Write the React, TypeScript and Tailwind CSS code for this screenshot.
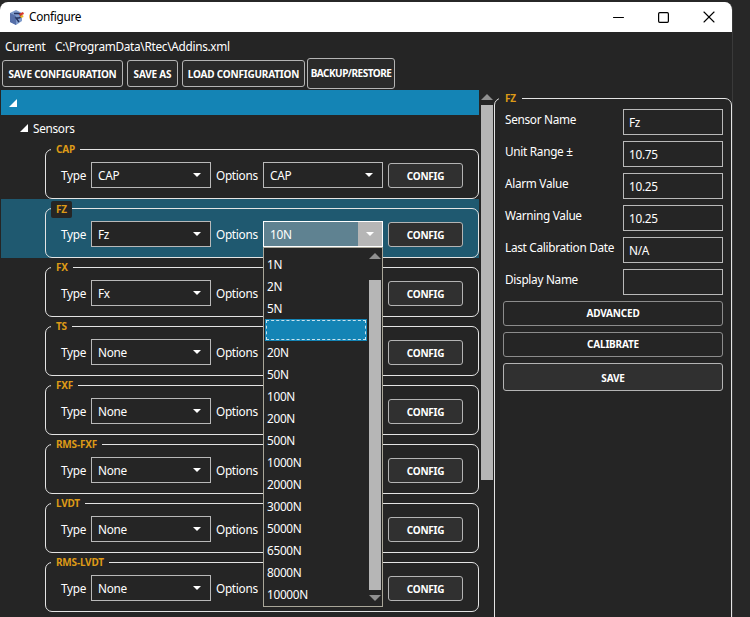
import { Minus, Square, X } from 'lucide-react';

const sensors = [
  { name: 'CAP', type: 'CAP', option: 'CAP' },
  { name: 'FZ', type: 'Fz', option: '10N', selected: true },
  { name: 'FX', type: 'Fx', option: '' },
  { name: 'TS', type: 'None', option: '' },
  { name: 'FXF', type: 'None', option: '' },
  { name: 'RMS-FXF', type: 'None', option: '' },
  { name: 'LVDT', type: 'None', option: '' },
  { name: 'RMS-LVDT', type: 'None', option: '' },
];

const ranges = ['1N', '2N', '5N', '', '20N', '50N', '100N', '200N', '500N', '1000N', '2000N', '3000N', '5000N', '6500N', '8000N', '10000N'];

const fields = [
  { label: 'Sensor Name', value: 'Fz' },
  { label: 'Unit Range ±', value: '10.75' },
  { label: 'Alarm Value', value: '10.25' },
  { label: 'Warning Value', value: '10.25' },
  { label: 'Last Calibration Date', value: 'N/A' },
  { label: 'Display Name', value: '' },
];

function AppIcon() {
  return (
    <svg width="17" height="17" viewBox="0 0 17 17" className="shrink-0">
      <path d="M8 1l6 3v8l-6 4-6-3V4z" fill="#7f9bcb" />
      <path d="M2 4l6 3v9l-6-3z" fill="#566fa8" />
      <path d="M6 4.5h4.5a2 2 0 0 1 0 4.5H8l3 4" fill="none" stroke="#24335f" strokeWidth="1.4" />
      <path d="M11 5l4-2 1 2-4 2z" fill="#d8372a" />
      <path d="M12 7l3-1 .5 2-2.5 1z" fill="#eeb51f" />
    </svg>
  );
}

function ToolButton({ label, className }: { label: string; className: string }) {
  return (
    <div className={`flex h-[27px] items-center justify-center rounded-[3px] border border-[#b4b4b4] bg-[#2a2a2a] pt-[2px] text-[10px] font-bold tracking-[-0.2px] text-white ${className}`}>
      {label}
    </div>
  );
}

function Caret() {
  return <div className="h-0 w-0 border-x-[4px] border-t-[4px] border-x-transparent border-t-white" />;
}

function ComboBox({ value }: { value: string }) {
  return (
    <div className="flex h-[26px] w-[120px] items-center justify-between border border-[#b9b9b9] bg-[#252525] pl-[6px] pr-[9px] text-white">
      <span className="pt-[2px]">{value}</span>
      <Caret />
    </div>
  );
}

function OpenComboBox({ value }: { value: string }) {
  return (
    <div className="relative h-[26px] w-[120px]">
      <div className="flex h-full border border-white bg-[#5f8291] text-white">
        <span className="flex-1 self-center pl-[6px] pt-[2px]">{value}</span>
        <div className="flex w-[24px] items-center justify-center bg-[#b6b6b6]">
          <Caret />
        </div>
      </div>
      <div className="absolute left-0 top-[26px] z-10 h-[360px] w-[120px] border border-[#a9a699] bg-[#252525] pl-px pt-[5px]">
        {ranges.map((range, i) => (
          <div
            key={i}
            className={`flex h-[22px] w-[102px] items-center pl-[2px] pt-[2px] text-white ${range === '' ? 'border-[2px] border-[#1484b5] bg-[#1484b5] outline-1 -outline-offset-2 outline-dashed outline-[#c8e4f0]' : ''}`}
          >
            {range}
          </div>
        ))}
        <div className="absolute right-px top-[5px] flex h-[348px] w-[12px] flex-col items-center">
          <div className="h-0 w-0 border-x-[6px] border-b-[6px] border-x-transparent border-b-[#8f8f8f]" />
          <div className="mt-[21px] h-[310px] w-[12px] bg-[#b6b6b6]" />
          <div className="mt-[5px] h-0 w-0 border-x-[6px] border-t-[6px] border-x-transparent border-t-[#8f8f8f]" />
        </div>
      </div>
    </div>
  );
}

function SensorRow({ name, type, option, selected }: { name: string; type: string; option: string; selected?: boolean }) {
  return (
    <div className={`h-[59px] pl-[44px] pt-[9px] ${selected ? 'bg-[#1f5970]' : ''}`}>
      <div className="relative flex h-[50px] items-center rounded-[7px] border border-[#e4e4e4] pl-[15px] pt-[2px] text-white">
        <div className={`absolute -top-[8px] left-[5px] flex items-center bg-[#252525] px-[5px] text-[10px] font-bold tracking-[-0.2px] text-[#dd9a17] ${selected ? 'h-[17px] rounded-[2px]' : 'h-[15px]'}`}>
          {name}
        </div>
        <span className="w-[30px] pt-[2px]">Type</span>
        <ComboBox value={type} />
        <span className="w-[52px] pl-[5px] pt-[2px]">Options</span>
        {selected ? <OpenComboBox value={option} /> : <ComboBox value={option} />}
        <div className="ml-[5px] flex h-[25px] w-[75px] items-center justify-center rounded-[3px] border border-[#b4b4b4] bg-[#303030] pt-[2px] text-[10px] font-bold tracking-[-0.2px]">
          CONFIG
        </div>
      </div>
    </div>
  );
}

export default function App() {
  return (
    <div className="h-[617px] w-[750px] overflow-hidden bg-[#272727] pt-[2px] font-['Noto_Sans',sans-serif] text-[11.8px] tracking-[-0.3px]">
      <div className="h-[615px] w-[733px] overflow-hidden rounded-t-[8px] border-r border-[#3a3a3a] bg-[#252525]">
        <div className="flex h-[30px] items-center bg-white pl-[8px] text-black">
          <AppIcon />
          <span className="ml-[4px]">Configure</span>
          <div className="ml-auto flex items-center">
            <Minus size={17} absoluteStrokeWidth strokeWidth={1.2} className="mr-[30px]" />
            <Square size={13} absoluteStrokeWidth strokeWidth={1.2} className="mr-[29px]" />
            <X size={20} absoluteStrokeWidth strokeWidth={1.1} className="mr-[13px]" />
          </div>
        </div>

        <div className="flex h-[26px] items-center pl-[5px] pt-[4px] text-white">
          <span className="w-[50px]">Current</span>
          <span>C:\ProgramData\Rtec\Addins.xml</span>
        </div>

        <div className="flex h-[31px] items-center pl-[2px]">
          <ToolButton label="SAVE CONFIGURATION" className="w-[121px]" />
          <ToolButton label="SAVE AS" className="ml-[4px] w-[51px]" />
          <ToolButton label="LOAD CONFIGURATION" className="ml-[4px] w-[123px]" />
          <div className="ml-[2px] flex h-[31px] w-[88px] items-center justify-center rounded-[3px] border border-[#b4b4b4] bg-[#2a2a2a] pb-px text-[10px] font-bold tracking-[-0.5px] text-white">
            BACKUP/RESTORE
          </div>
        </div>

        <div className="mt-px flex">
          <div className="ml-px w-[478px]">
            <div className="flex h-[25px] items-center bg-[#1484b5] pl-[8px]">
              <div className="h-0 w-0 border-b-[8px] border-l-[8px] border-b-white border-l-transparent" />
            </div>
            <div className="flex h-[25px] items-center pl-[19px] pt-px text-white">
              <div className="h-0 w-0 border-b-[8px] border-l-[8px] border-b-white border-l-transparent" />
              <span className="ml-[5px] pt-[2px]">Sensors</span>
            </div>
            {sensors.map((sensor) => (
              <SensorRow key={sensor.name} {...sensor} />
            ))}
          </div>

          <div className="ml-[2px] flex w-[12px] flex-col items-center pt-[4px]">
            <div className="h-0 w-0 border-x-[6px] border-b-[6px] border-x-transparent border-b-[#8f8f8f]" />
            <div className="mt-[5px] h-[375px] w-[12px] bg-[#b6b6b6]" />
          </div>

          <div className="relative ml-px mt-[8px] h-[560px] w-[238px] rounded-[7px] border border-[#e4e4e4] px-[8px] pt-[10px] text-white">
            <div className="absolute -top-[8px] left-[4px] flex h-[15px] items-center bg-[#252525] px-[6px] text-[10px] font-bold tracking-[-0.2px] text-[#dd9a17]">
              FZ
            </div>
            <div className="flex flex-col gap-[6px]">
              {fields.map((field) => (
                <div key={field.label} className="flex h-[26px] justify-between">
                  <span className="whitespace-nowrap pl-[2px] leading-[20px]">{field.label}</span>
                  <div className="flex w-[100px] items-center border border-[#b9b9b9] pl-[5px] pt-[2px]">{field.value}</div>
                </div>
              ))}
            </div>
            <div className="mt-[6px] flex h-[25px] items-center justify-center rounded-[3px] border-[1.5px] border-[#8c8c8c] text-[10px] font-bold tracking-[-0.2px]">ADVANCED</div>
            <div className="mt-[6px] flex h-[25px] items-center justify-center rounded-[3px] border-[1.5px] border-[#8c8c8c] text-[10px] font-bold tracking-[-0.2px]">CALIBRATE</div>
            <div className="mt-[6px] flex h-[28px] items-center justify-center rounded-[3px] border border-[#b4b4b4] bg-[#303030] pt-[2px] text-[10px] font-bold tracking-[-0.2px]">SAVE</div>
          </div>
        </div>
      </div>
    </div>
  );
}
